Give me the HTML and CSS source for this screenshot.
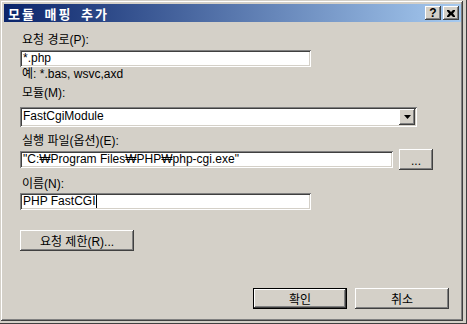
FILE: index.html
```html
<!DOCTYPE html>
<html lang="ko">
<head>
    <meta charset="UTF-8">
    <title>모듈 매핑 추가</title>
    <link rel="stylesheet" href="styles.css">
</head>
<body>
    <div class="screen">
        <div class="window">
            <div class="titlebar">
                <span class="title">모듈 매핑 추가</span>
                <div class="caption-buttons">
                    <div class="cap-btn help">?</div>
                    <div class="cap-btn close">
                        <svg width="8" height="7" viewBox="0 0 8 7">
                            <path d="M0 0h2l2 2 2-2h2v1l-2 2.5 2 2.5v1h-2l-2-2-2 2h-2v-1l2-2.5-2-2.5z" fill="#000"/>
                        </svg>
                    </div>
                </div>
            </div>

            <div class="content">
                <div class="label first">요청 경로(P):</div>
                <div class="field short">*.php</div>
                <div class="hint">예: *.bas, wsvc,axd</div>

                <div class="label">모듈(M):</div>
                <div class="field combo">
                    <span>FastCgiModule</span>
                    <div class="drop">
                        <svg width="7" height="4" viewBox="0 0 7 4"><path d="M0 0h7l-3.5 4z" fill="#000"/></svg>
                    </div>
                </div>

                <div class="label gap-lg">실행 파일(옵션)(E):</div>
                <div class="row">
                    <div class="field long">"C:₩Program Files₩PHP₩php-cgi.exe"</div>
                    <div class="btn browse">...</div>
                </div>

                <div class="label gap-lg">이름(N):</div>
                <div class="field short name">PHP FastCGI<span class="caret"></span></div>

                <div class="btn limits">요청 제한(R)...</div>

                <div class="footer">
                    <div class="btn default">확인</div>
                    <div class="btn">취소</div>
                </div>
            </div>
        </div>
    </div>
</body>
</html>
```

FILE: styles.css
```css
body {
    margin: 0;
    background-color: #d4d0c8;
    font-family: "Liberation Sans", "Noto Sans CJK KR", sans-serif;
    font-size: 12px;
    color: #000;
}

.screen {
    width: 467px;
    height: 324px;
    box-sizing: border-box;
    background-color: #d4d0c8;
    border-right: 1px solid #404040;
    border-bottom: 1px solid #404040;
}

.window {
    width: 463px;
    height: 321px;
    box-sizing: border-box;
    background-color: #d4d0c8;
    box-shadow: inset 1px 1px #d4d0c8, inset -1px -1px #404040,
                inset 2px 2px #fff, inset -2px -2px #808080;
    overflow: hidden;
}

/* title bar */
.titlebar {
    height: 18px;
    margin: 4px 2px 0 4px;
    padding: 0 2px 0 4px;
    display: flex;
    align-items: center;
    justify-content: space-between;
    background: linear-gradient(to right, #0a246a, #a6caf0);
}

.title {
    color: #fff;
    font-weight: bold;
    font-size: 13px;
    letter-spacing: 2px;
    word-spacing: 3px;
}

.caption-buttons {
    display: flex;
    gap: 2px;
}

.cap-btn {
    width: 16px;
    height: 14px;
    box-sizing: border-box;
    background-color: #d4d0c8;
    box-shadow: inset -1px -1px #404040, inset 1px 1px #fff,
                inset -2px -2px #808080;
    display: flex;
    align-items: center;
    justify-content: center;
}

.help {
    font-weight: bold;
    font-size: 12px;
    line-height: 14px;
}

/* form */
.content {
    padding-left: 20px;
}

.label {
    line-height: 13px;
    padding-left: 2px;
    margin-top: 6px;
}

.label.first {
    margin-top: 12px;
}

.label.gap-lg {
    margin-top: 8px;
}

.field {
    height: 17px;
    box-sizing: border-box;
    margin-top: 3px;
    padding: 2px 0 0 3px;
    background-color: #fff;
    line-height: 13px;
    white-space: nowrap;
    box-shadow: inset 1px 1px #808080, inset -1px -1px #fff,
                inset 2px 2px #404040, inset -2px -2px #d4d0c8;
}

.short {
    width: 291px;
}

.long {
    width: 373px;
    margin-top: 0;
}

.name {
    margin-top: 2px;
}

.caret {
    display: inline-block;
    width: 1px;
    height: 13px;
    margin-left: 1px;
    vertical-align: top;
    background-color: #000;
}

.hint {
    line-height: 13px;
    padding-left: 2px;
    margin-top: 1px;
}

.combo {
    width: 397px;
    height: 20px;
    margin-top: 7px;
    padding: 2px 2px 0 3px;
    display: flex;
    justify-content: space-between;
    align-items: flex-start;
}

.combo span {
    padding-top: 1px;
}

.drop {
    width: 16px;
    height: 16px;
    box-sizing: border-box;
    background-color: #d4d0c8;
    box-shadow: inset -1px -1px #404040, inset 1px 1px #fff,
                inset -2px -2px #808080;
    display: flex;
    align-items: center;
    justify-content: center;
}

.row {
    display: flex;
    align-items: center;
    gap: 6px;
    margin-top: 1px;
    height: 21px;
}

/* buttons */
.btn {
    height: 21px;
    box-sizing: border-box;
    background-color: #d4d0c8;
    box-shadow: inset -1px -1px #404040, inset 1px 1px #fff,
                inset -2px -2px #808080;
    display: flex;
    align-items: center;
    justify-content: center;
}

.browse {
    width: 34px;
    padding-top: 3px;
}

.limits {
    width: 114px;
    margin-top: 20px;
}

.footer {
    display: flex;
    justify-content: flex-end;
    gap: 8px;
    margin-top: 37px;
    padding-right: 14px;
}

.footer .btn {
    width: 94px;
}

.footer .btn.default {
    box-shadow: inset 0 0 0 1px #000, inset -2px -2px #404040,
                inset 2px 2px #fff, inset -3px -3px #808080;
}
```
